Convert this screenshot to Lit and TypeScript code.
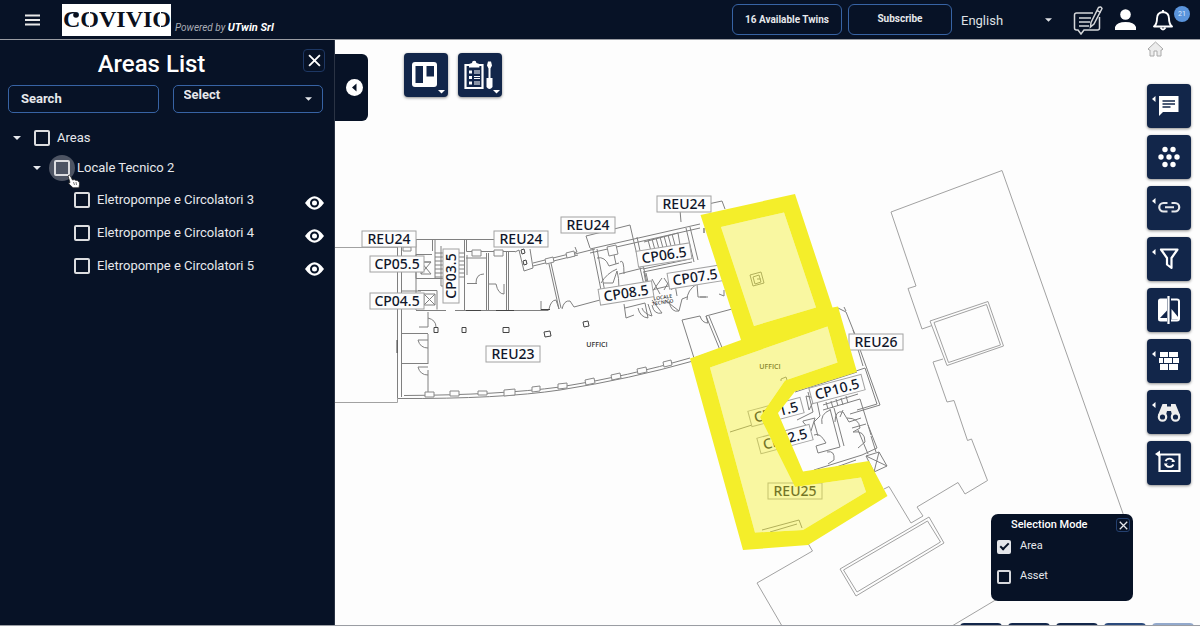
import { LitElement, html, svg, css } from "lit";
import { customElement, property, state } from "lit/decorators.js";

/* ---------- icons ---------- */

const caretDown = html`<svg class="caret" width="8" height="4" viewBox="0 0 8 4" aria-hidden="true"><path d="M0 0h8L4 4z" fill="currentColor"/></svg>`;
const cross = (size: number) => html`<svg width=${size} height=${size} viewBox="0 0 12 12" aria-hidden="true"><path d="M1 1l10 10M11 1L1 11" stroke="currentColor" stroke-width="1.7" fill="none"/></svg>`;

const toolIcons: Record<string, unknown> = {
  board: svg`<rect x="8" y="9" width="25" height="25" rx="3" fill="#fff"/><path d="M11.500 13h7.500v17h-7.500zM22.500 13h7.500v10.500h-7.500z" fill="#12264a"/><path d="M34 37h7l-3.500 3.500z" fill="#fff"/>`,
  checklist: svg`<path d="M7.500 12h17v23h-17z" fill="none" stroke="#fff" stroke-width="2.200"/><path d="M11 14.500v-3.500l3-1a2.200 2.200 0 0 1 4.400 0l3 1v3.500z" fill="#fff"/><path d="M11 17.500h3v3h-3zM11 23h3v3h-3zM11 28.500h3v3h-3z" fill="#fff"/><path d="M16 18h6M16 20h6M16 23.500h6M16 25.500h6M16 29h6M16 31h6" stroke="#fff" stroke-width="1.200"/><path d="M30 8.500h3l1 4-1.500 3v9.500h-2v-9.500L29 12.500zM28.500 25h6v9q-3 4-6 0z" fill="#fff"/><path d="M35 37h7l-3.500 3.500z" fill="#fff"/>`,
  comment: svg`<path d="M12 12h19.500v16H16l-4 4z" fill="#fff"/><path d="M15.500 17h12.500M15.500 20h12.500M15.500 23h8" stroke="#12264a" stroke-width="1.500"/>`,
  dots: svg`<g fill="#fff"><circle cx="18" cy="14.500" r="2.700"/><circle cx="26" cy="14.500" r="2.700"/><circle cx="14" cy="22" r="2.700"/><circle cx="22" cy="22" r="2.700"/><circle cx="30" cy="22" r="2.700"/><circle cx="18" cy="29.500" r="2.700"/><circle cx="26" cy="29.500" r="2.700"/></g>`,
  link: svg`<path d="M20.500 17h-4a4.250 4.250 0 0 0 0 8.500h4M24.500 17h3.500a4.250 4.250 0 0 1 0 8.500h-3.500M18 21.250h9" fill="none" stroke="#e6e8ec" stroke-width="2.200"/>`,
  filter: svg`<path d="M14 12.500h16.500l-6 8.500v10L20 27.500V21z" fill="none" stroke="#fff" stroke-width="2.200" stroke-linejoin="round"/>`,
  compare: svg`<path d="M20 10.500h-6.500q-2.500 0-2.500 2.500v18q0 2.500 2.500 2.500H20z" fill="#fff"/><path d="M13 30l7-7.500V30z" fill="#12264a"/><path d="M21.500 8v28" stroke="#fff" stroke-width="2.200"/><path d="M24 11.500h6q2 0 2 2v17q0 2-2 2h-6" fill="none" stroke="#fff" stroke-width="2"/><path d="M24.500 21l7 8.500v2h-7z" fill="#fff"/>`,
  wall: svg`<path d="M13 13h8v5h-8zM22 13h9v5h-9zM12 19h4v5h-4zM17 19h8v5h-8zM26 19h6v5h-6zM13 25h8v6h-8zM22 25h9v6h-9z" fill="#fff"/>`,
  binoculars: svg`<path d="M15.500 14h4.500v2.500h4V14h4.500l4.500 11h-8l-1-4h-4l-1 4h-8z" fill="#eee"/><circle cx="15.500" cy="27" r="3.700" fill="#12264a" stroke="#eee" stroke-width="2.200"/><circle cx="28.500" cy="27" r="3.700" fill="#12264a" stroke="#eee" stroke-width="2.200"/>`,
  rotate: svg`<path d="M12.500 13.500h20v16.500h-20z" fill="none" stroke="#fff" stroke-width="2.200"/><path d="M18.500 20a4.500 4.500 0 0 1 8 0M26.500 23.500a4.500 4.500 0 0 1-8 0" fill="none" stroke="#fff" stroke-width="1.800"/><path d="M28 21h-4l3-2.500zM17 22.500h4l-3 2.500z" fill="#fff"/><path d="M8 13l5-3.500v7z" fill="#fff"/>`,
};

@customElement("tool-button")
class ToolButton extends LitElement {
  @property() icon = "";
  @property() label = "";
  @property({ type: Boolean }) flyout = false;

  static styles = css`
    :host { display: block; }
    button {
      display: block; width: 44px; height: 44px; padding: 0; border: 0; border-radius: 4px;
      background: #12264a; box-shadow: 0 1px 3px rgba(0, 0, 0, .45); cursor: pointer;
    }
    svg { display: block; width: 44px; height: 44px; }
  `;

  render() {
    return html`<button aria-label=${this.label}>
      <svg viewBox="0 0 44 44" aria-hidden="true">
        ${this.flyout ? svg`<path d="M8.500 12v6L5 15z" fill="#fff"/>` : null}
        ${toolIcons[this.icon]}
      </svg>
    </button>`;
  }
}

/* ---------- floor plan ---------- */

type Tag = [text: string, x: number, y: number, angle: number];

const tags: Tag[] = [
  ["REU24", 389, 239, 0], ["CP05.5", 397, 264, 0], ["CP04.5", 397, 301, 0], ["CP03.5", 451, 276, -90],
  ["REU24", 521, 239, 0], ["REU24", 588, 225, 0], ["REU24", 684, 204, 0], ["REU23", 513, 354, 0],
  ["CP06.5", 664, 255, -9], ["CP07.5", 695, 277, -9], ["CP08.5", 626, 293, -9], ["REU26", 876, 342, 0],
  ["CP10.5", 837, 389, -15], ["CP11.5", 776, 412, -15], ["CP12.5", 785, 439, -15], ["REU25", 795, 491, 0],
];

@customElement("floor-plan")
class FloorPlan extends LitElement {
  static styles = css`
    :host { display: block; height: 100%; }
    svg { display: block; width: 100%; height: 100%; }
    .site { fill: none; stroke: #a2a2a2; }
    .wall { fill: none; stroke: #808080; }
    .dark { fill: none; stroke: #444; }
    .pier { fill: #fdfdfd; stroke: #888; }
    .tag rect { fill: #fdfdfd; stroke: #a2a2a2; }
    .tag text { font: 500 14px "Noto Sans", sans-serif; fill: #10162a; text-anchor: middle; }
    .room { font: 600 7px "Open Sans", sans-serif; fill: #333; text-anchor: middle; }
    .tiny { font: 600 5px "Open Sans", sans-serif; fill: #333; text-anchor: middle; }
    .zone { fill: #f3ee28; fill-opacity: .43; }
    .ring { fill: #f4ee2a; }
  `;

  render() {
    return html`<svg viewBox="335 40 865 585" preserveAspectRatio="xMinYMin slice" role="img" aria-label="Floor plan">
      <g class="site">
        <path d="M335 247.500H397.500V402.500H335"/>
        <path d="M891 212L1002 170.500 1126 522 952 626M891 212L916 286 908 288.500 922 329 932 325.500M943 359L933 362 947 402 954 400.500 967.500 440.500 971.500 439 987.500 480.500 965 494 958 482.500 917 507 923 516 911 523 889 486.500 884 489"/>
        <path d="M930 321L988 301.500 1003.500 346 947 365.500zM934 322.500L986.500 304.500 1000.500 345 948.500 362.500z"/>
        <path d="M840 569L929 517 944 543 856 596zM843.500 570L927.500 521 940.500 542 857 592z"/>
        <path d="M806 540L812.500 551 757 583 782 626"/>
        <path d="M713 436l8 26M712 436l4-2"/>
      </g>
      <g class="wall">
        <path d="M416 239.500H494M401.500 247V397M397.500 247V398M416 240V310M432.500 240V251M435 240V278M464.500 240V310M466.500 240V251.500H515M416 278.500H443M416 278.500v-24h16"/>
        <path d="M435 253h30M435 257h30M435 261h30M435 265h30M435 269h30M435 273h30M435 277h30M441 246v40h5"/>
        <path d="M418 290.500h19v19M401 291h20M416 310.500H446M455 310.500H515M421 274l10-12M421 262l10 12h-10v-12h10zM424 294h11v11h-11zl11 11M435 294l-11 11"/>
        <path d="M466 258h20M486.500 253V310M488.500 253V310M506.500 252V310M508.500 252V310M467 283.500h10M476 283q0-9 8-9M488 284h8M496 284q2 10 8 10V284M467 255v20"/>
        <path d="M401 333.500H428M401 363.500H428M428 312v15h-9M428 334v30M428 370v26M418 340q2 8 10 8M418 367q2 8 10 8M428 318q8 2 8 9M418 340h10M418 367h10"/>
        <path d="M515 252L519 250 524 271 533 268 530 249M533 263L577 252 575 247M533 266L578 255"/>
        <path d="M549 264L559 309M551 263L561 308M508 310.500H548M541 301v9h8M549 309q2-9 7-9l3 9M562 309q2-9 8-8l4 6 26-7M575 254L595 249"/>
        <path d="M398 398.500Q500 399 560 390 630 379 693 361M404 395.500Q500 395 560 387 630 376 690 358"/>
      </g>
      <g class="wall">
        <path d="M590 248L586 236 630 225 633 238M681 222l-1-12 42-9 3 8M590 249L700 224M590 253L700 228M593 250L603 300M597 249L606 298M633 238L644 285M637 237L647 283M686 228L694 262M690 227L698 260"/>
        <path d="M644 242l34-9 2 12-36 9M648 240l3 11M652 239l3 11M656 238l3 11M660 237l3 11M664 236l3 11M668 235l3 11M672 234l3 11"/>
        <path d="M597 258q8-2 12 8l10-3M613 250l3 14M603 283h10l4-12q2 6 2 18M619 274l24-6M620 262q4-4 4 12M601 283q6-10 16-14"/>
        <path d="M643 272L692 262M643 269L690 259M648 282l-2-9M652 279l8 15M662 278l-10 14M664 278l8 12M672 276l-8 14M644 272l4 24M673 273l4 23"/>
        <path d="M600 302L690 281M624 304l2 14 8-3M625 308l20-5 3 15q-8-1-10-10M648 304l4 12q-8-2-10-8M652 300l10 13q-8 2-10-8M665 300l14 11q-8 2-10-10M679 311l3-12 5-2M687 300q0-10 10-16l1 13h8M700 297h8M724 290v6l-5-2M682 320l18-4q2 7 8 7l-2-7 26-7 5 8M682 320l12 38M706 316l14 34M709 316l14 34M694 358L741 342"/>
      </g>
      <g class="pier">
        <path d="M425 392h9v5h-9zM450 391h9v5h-9zM478 391h9v4h-9zM504 390l11-1v6l-11 1zM532 387l8-1v5l-8 1zM558 384l9-1v5l-9 1zM585 380l9-2 1 5-9 2zM611 375l9-2 1 5-9 2zM637 369l9-2 1 5-9 2zM663 362l8-2 1 5-8 2zM403 247h8v4h-8zM472 250h9v6h-9zM494 250h9v6h-9zM545 259l8-2 1 5-8 2zM566 253l8-2 1 5-8 2zM607 247l9-2 2 9-9 2z"/>
      </g>
      <g class="dark">
        <path d="M434 327.500h4v5h-4zM462 327.500h4v5h-4zM503 327.500h6v5h-6zM544 332l6-1 1 5-6 1zM583 322l5-1 1 5-5 1zM521 250l3-1 1 4-3 1zM523 261l3-1 1 4-3 1zM397 340v13M466 310.500h15M496 310.500h18M541 309.500h9M704 228v5"/>
      </g>
      <g class="wall">
        <path d="M838 308l8 4 10 25M846 311l-2-4M853 330l27 75-30 9M857 346l6 20M853 372l12-4 12 36-20 6M795 392L857 372M797 420L813 412 808 392M806 396l9 2-6 12zM803 421l12-3-4 13-8-9zM815 392l5 24-6 6 4 14"/>
        <path d="M823 405L858 394M823 410L860 399 868 425 877 448 862 455 814 470M826 402l2 7M831 401l2 7M836 399l2 7M841 398l2 7M846 396l2 7"/>
        <path d="M830 409l10 38-22 6-2-7 10-3q-6-11-12-8M834 408l10 38M822 424q-2-10 8-14M835 422q0-12 8-10l6 10 12-4M843 410l-3 7M847 418q12 0 13 10l-7 4M852 428l14-4M853 432q12-2 12 10l-7 6M858 430l10 24M868 425l3 10M871 436l5 16M827 452q8-2 7 8l-6 4M795 482L856 460M866 456l13-4 8 14-13 6zM866 456l21 10M879 452l-5 20"/>
        <path d="M730 432L752 425M762 530L799 520 802 528M770 532L797 524"/>
        <path d="M750 275l11-3 3 11-11 3zM753 277l6-2 2 7-6 2zM757 279h4M781 381v-2l5-2 1 3"/>
      </g>
      ${tags.map(([text, x, y, angle]) => svg`<g class="tag" transform=${`translate(${x} ${y}) rotate(${angle})`}>
        <rect x="-27" y="-8" width="54" height="16"/><text y="5">${text}</text></g>`)}
      <text class="room" x="597" y="347">UFFICI</text>
      <text class="room" x="770" y="369">UFFICI</text>
      <text class="tiny" transform="translate(663 299) rotate(-9)">LOCALE</text>
      <text class="tiny" transform="translate(663 304) rotate(-9)">TECNICO</text>
      <path class="zone" d="M721 227L784 212.500 816 307.500 754 326zM710 367.500L827.500 326.500 837.500 362.500 785 380.500 760 417 795 487 861 477.500 866 492 803 530 755 532.500z"/>
      <path class="ring" fill-rule="evenodd" d="M700.500 215L795 194 832.500 307.500 838 306.500 857 372 795 391.500 778 413 803 471.500 869 461 887.500 496 808 545 743 550 690 358.500 741 340zM721 227L784 212.500 816 307.500 754 326zM710 367.500L827.500 326.500 837.500 362.500 785 380.500 760 417 795 487 861 477.500 866 492 803 530 755 532.500z"/>
    </svg>`;
  }
}

/* ---------- areas sidebar ---------- */

@customElement("areas-panel")
class AreasPanel extends LitElement {
  @state() private items = [3, 4, 5];

  static styles = css`
    :host { display: block; padding: 9px 11px 0 8px; box-sizing: border-box; color: #fff; }
    .head { display: grid; grid-template-columns: 22px 1fr 22px; align-items: start; height: 36px; margin-right: -2px; }
    h1 { grid-column: 2; margin: 0; font-size: 24px; line-height: 30px; font-weight: 500; text-align: center; padding-right: 30px; }
    button { color: inherit; background: none; padding: 0; cursor: pointer; }
    .close { display: grid; place-items: center; width: 22px; height: 23px; border: 1px solid #1d3763; border-radius: 4px; }
    .filters { display: grid; grid-template-columns: 1fr 1fr; gap: 14px; }
    input, select { font: inherit; color: inherit; }
    .box {
      box-sizing: border-box; width: 100%; min-width: 0; height: 28px; border: 1px solid #3763a4; border-radius: 5px;
      background: transparent; appearance: none; font-size: 13px; line-height: 18px; font-weight: 700;
    }
    .search { padding: 0 12px 1px; }
    .search::placeholder { color: #e6e8ec; opacity: 1; }
    .pick { display: grid; align-items: center; color: #e6e8ec; }
    .pick > * { grid-area: 1 / 1; }
    .pick select { padding: 0 10px 8px; }
    .pick .caret { justify-self: end; margin-right: 11px; width: 7px; pointer-events: none; }
    ul { list-style: none; margin: 0; padding: 0; }
    .tree { padding-top: 10px; font-size: 13px; line-height: 20px; color: #e6e8ec; }
    .tree ul { padding-left: 20px; }
    .row { display: flex; align-items: center; height: 30px; }
    .leaf { height: 33px; }
    .toggle { border: 0; width: 18px; height: 18px; display: grid; place-items: center; }
    .halo { display: grid; place-items: center; width: 26px; height: 26px; margin: 0 2px 0 3px; border-radius: 13px; }
    .hover { background: #4d5463; position: relative; }
    .check { appearance: none; margin: 0; width: 16px; height: 16px; border: 2px solid #dcdde0; border-radius: 2px; box-sizing: border-box; }
    .leaf .halo { margin-left: 21px; }
    .leaf label { flex: 1; }
    .eye { border: 0; height: 14px; padding-top: 6px; box-sizing: content-box; margin-right: -1px; }
    .eye svg { display: block; }
    .hand { position: absolute; left: 18px; top: 19px; }
  `;

  private leaf(n: number) {
    return html`<li class="row leaf">
      <span class="halo"><input class="check" type="checkbox" id="c${n}"></span>
      <label for="c${n}">Eletropompe e Circolatori ${n}</label>
      <button class="eye" aria-label="Show Eletropompe e Circolatori ${n}">
        <svg width="19" height="14" viewBox="0 0 19 14"><path d="M0 7Q9.500-6.500 19 7 9.500 20.500 0 7z" fill="#fff"/><circle cx="9.500" cy="7" r="3.500" fill="none" stroke="#071226" stroke-width="2"/></svg>
      </button>
    </li>`;
  }

  render() {
    return html`
      <div class="head"><h1>Areas List</h1><button class="close" aria-label="Close">${cross(13)}</button></div>
      <div class="filters">
        <input class="box search" type="text" placeholder="Search" aria-label="Search">
        <div class="pick"><select class="box" aria-label="Select"><option>Select</option></select>${caretDown}</div>
      </div>
      <ul class="tree"><li>
        <div class="row">
          <button class="toggle" aria-label="Collapse Areas">${caretDown}</button>
          <span class="halo"><input class="check" type="checkbox" id="areas"></span><label for="areas">Areas</label>
        </div>
        <ul><li>
          <div class="row">
            <button class="toggle" aria-label="Collapse Locale Tecnico 2">${caretDown}</button>
            <span class="halo hover"><input class="check" type="checkbox" id="lt2">
              <svg class="hand" width="13" height="15" viewBox="0 0 13 15" aria-hidden="true"><path d="M1 2q1-2 2.500 0l2 4q2-1 3 .300 2-.500 2.500 1 2 0 1.500 3l-.500 3.500H6L2 10q-1-2 1-1.500z" fill="#fff" stroke="#222" stroke-width=".8"/><path d="M6.500 8l1 3M9 8l.500 3" stroke="#444" stroke-width=".7"/></svg>
            </span><label for="lt2">Locale Tecnico 2</label>
          </div>
          <ul>${this.items.map((n) => this.leaf(n))}</ul>
        </li></ul>
      </li></ul>`;
  }
}

/* ---------- page ---------- */

const railTools = [
  { icon: "comment", label: "Comments", flyout: true },
  { icon: "dots", label: "Sensors", flyout: false },
  { icon: "link", label: "Links", flyout: true },
  { icon: "filter", label: "Filter", flyout: true },
  { icon: "compare", label: "Compare", flyout: false },
  { icon: "wall", label: "Walls", flyout: true },
  { icon: "binoculars", label: "Explore", flyout: true },
  { icon: "rotate", label: "Reset view", flyout: false },
];

@customElement("app-root")
class AppRoot extends LitElement {
  static styles = css`
    :host { display: flex; flex-direction: column; height: 100vh; font-family: Roboto, sans-serif; background: #fdfdfd; overflow: hidden; }
    button { font: inherit; color: inherit; background: none; border: 0; padding: 0; cursor: pointer; }
    header { display: flex; align-items: center; flex: none; height: 39px; padding: 0 10px 0 25px; background: #071226; color: #fff; border-bottom: 1px solid #9a9da3; }
    header svg { display: block; }
    .logo { margin-left: 22px; width: 109px; height: 32px; background: #fff; }
    .logo text { font: 700 24px "Liberation Serif", serif; fill: #0a0f1c; }
    .powered { margin: 16px auto 0 4px; font-size: 10px; line-height: 14px; font-style: italic; color: #a9adb5; }
    .powered b { font-size: 11px; color: #fff; }
    .pill { width: 110px; height: 31px; margin-right: 6px; border: 1px solid #3763a4; border-radius: 6px; font-size: 10px; line-height: 16px; font-weight: 700; color: #e6e8ec; box-sizing: border-box; }
    .sub { width: 104px; margin-right: 9px; padding-bottom: 2px; }
    .lang { display: grid; align-items: center; width: 91px; margin-right: 21px; color: #dfe1e5; }
    .lang > * { grid-area: 1 / 1; }
    .lang select { appearance: none; border: 0; background: none; color: inherit; font: 13px/20px Roboto, sans-serif; padding: 2px 0 0; }
    .lang .caret { justify-self: end; width: 7px; pointer-events: none; }
    .user { margin: 0 16px 0 12px; }
    .bell { position: relative; width: 38px; }
    .badge { position: absolute; right: 0; top: -3px; width: 16px; height: 16px; border-radius: 8px; background: #5a94dc; font-size: 7px; line-height: 16px; color: #dcebff; }
    main { display: flex; flex: 1; min-height: 0; border-bottom: 1px solid #9a9da3; margin-bottom: 1px; }
    areas-panel { width: 335px; flex: none; background: #071226; border-right: 1px solid #2a3344; }
    .map { position: relative; flex: 1; min-width: 0; overflow: hidden; }
    .handle { position: absolute; left: 0; top: 14px; width: 33px; height: 67px; border-radius: 0 6px 6px 0; background: #071226; display: grid; place-items: center; padding-left: 6px; }
    .top { position: absolute; left: 69px; top: 13px; display: flex; gap: 10px; }
    .rail { position: absolute; right: 9px; top: 44px; display: grid; gap: 7px; }
    .home { position: absolute; right: 36px; top: 1px; }
    .mode { position: absolute; right: 67px; top: 474px; width: 142px; height: 87px; box-sizing: border-box; border-radius: 7px; background: #071226; color: #e6e8ec; font-size: 11px; line-height: 14px; padding: 4px 3px 0 6px; }
    .bar { display: flex; align-items: center; }
    h2 { flex: 1; margin: 0; font-size: 11px; line-height: 14px; font-weight: 500; text-align: left; color: #fff; padding-left: 14px; }
    .bar button { display: grid; place-items: center; width: 14px; height: 14px; border: 1px solid #24406f; border-radius: 3px; box-sizing: border-box; }
    .opt { display: flex; align-items: center; gap: 9px; height: 30px; }
    .opt span { padding-bottom: 3px; }
    .opt input { appearance: none; margin: 0; width: 14px; height: 14px; border: 2px solid #d7d9dd; border-radius: 2px; box-sizing: border-box; display: grid; place-items: center; }
    .opt input:checked { background: #e4e6ea; border-color: #e4e6ea; }
    .opt input:checked::after { content: ""; width: 7px; height: 3px; border: solid #071226; border-width: 0 0 2px 2px; transform: rotate(-45deg); margin-bottom: 3px; box-sizing: content-box; }
    .dock { position: absolute; right: 6px; bottom: 0; height: 2px; overflow: hidden; display: flex; gap: 6px; }
    .dock button { width: 42px; height: 44px; border-radius: 4px; background: #12264a; }
    .dock .soft { background: #2b4a7c; }
    .dock .idle { background: #93a9cc; }
  `;

  render() {
    return html`
      <header>
        <button aria-label="Menu"><svg width="15" height="12" viewBox="0 0 15 12"><path d="M0 1.500h15M0 6h15M0 10.500h15" stroke="#e8e8e8" stroke-width="1.800"/></svg></button>
        <svg class="logo" viewBox="0 0 109 32" role="img" aria-label="Covivio"><text x="1" y="23">COVIVIO</text><path d="M27.500 5v20M98.500 5v20" stroke="#fff" stroke-width="1"/><circle cx="14" cy="11" r="2.800" fill="#0a0f1c"/></svg>
        <div class="powered">Powered by <b>UTwin Srl</b></div>
        <button class="pill">16 Available Twins</button>
        <button class="pill sub">Subscribe</button>
        <div class="lang"><select aria-label="Language"><option>English</option></select>${caretDown}</div>
        <button aria-label="Notes"><svg width="30" height="30" viewBox="0 0 30 30" fill="none" stroke="#d5d7da" stroke-width="1.500"><path d="M20 8H3.500Q1.500 8 1.500 10v13q0 2 2 2H5l3 4 3-4h13.500q2 0 2-2V12"/><path d="M6 13h12M6 17h11M6 21h10"/><path d="M18 17.500L25.500 2.500q2.500-1.500 3.500 1L21 19l-3.500 3z"/><path d="M24 5.500l3.500 1.800"/></svg></button>
        <button class="user" aria-label="Account"><svg width="21" height="21" viewBox="0 0 21 21" fill="#fff"><circle cx="10.500" cy="5.500" r="5.300"/><path d="M0 21v-3q2-5 10.500-5T21 18v3z"/></svg></button>
        <button class="bell" aria-label="Notifications, 21"><svg width="22" height="22" viewBox="0 0 22 22" fill="none" stroke="#fff" stroke-width="1.900"><path d="M2 17.500h18q-3-2.500-3-8 0-6-6-6.500-6 .500-6 6.500 0 5.500-3 8z" stroke-linejoin="round"/><path d="M11 1v2M8.500 18.500q2.500 4 5 0"/></svg><span class="badge">21</span></button>
      </header>
      <main>
        <areas-panel></areas-panel>
        <section class="map">
          <floor-plan></floor-plan>
          <button class="handle" aria-label="Collapse panel"><svg width="17" height="17" viewBox="0 0 17 17"><circle cx="8.500" cy="8.500" r="8.500" fill="#fff"/><path d="M10.500 4.500v8L6 8.500z" fill="#071226"/></svg></button>
          <div class="top">
            <tool-button icon="board" label="Boards"></tool-button>
            <tool-button icon="checklist" label="Maintenance"></tool-button>
          </div>
          <a class="home" href="#" aria-label="Home"><svg width="17" height="16" viewBox="0 0 17 16"><path d="M1 8l7.500-7L16 8l-1 1h-1v6h-4v-5H7v5H3V9H2z" fill="#ececec" stroke="#aaa"/></svg></a>
          <nav class="rail">${railTools.map((t) => html`<tool-button icon=${t.icon} label=${t.label} ?flyout=${t.flyout}></tool-button>`)}</nav>
          <div class="mode">
            <div class="bar"><h2>Selection Mode</h2><button aria-label="Close">${cross(9)}</button></div>
            <label class="opt"><input type="checkbox" checked><span>Area</span></label>
            <label class="opt"><input type="checkbox"><span>Asset</span></label>
          </div>
          <div class="dock">
            <button aria-label="Dock 1"></button><button aria-label="Dock 2"></button><button aria-label="Dock 3"></button>
            <button class="soft" aria-label="Dock 4"></button><button class="idle" aria-label="Dock 5"></button>
          </div>
        </section>
      </main>`;
  }
}
